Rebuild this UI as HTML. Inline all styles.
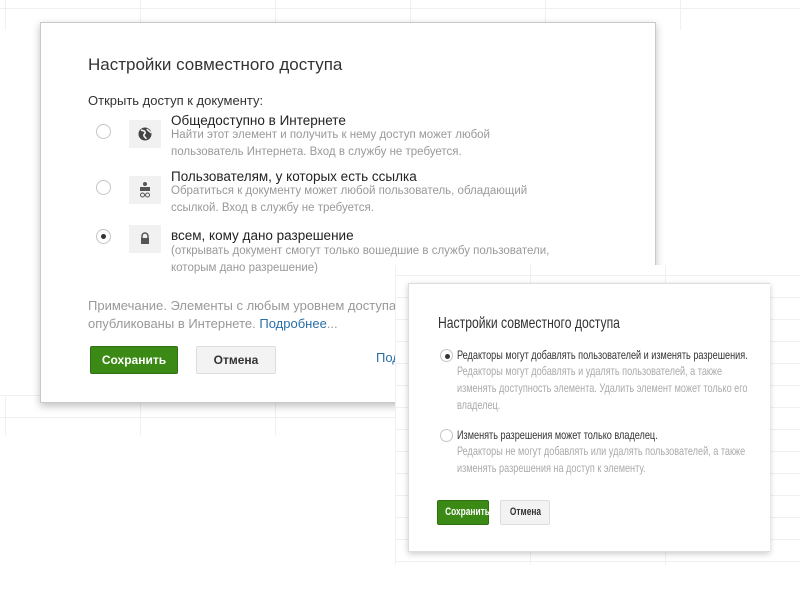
<!DOCTYPE html>
<html><head><meta charset="utf-8"><style>
*{margin:0;padding:0;box-sizing:border-box}
body{width:800px;height:600px;background:#fff;position:relative;overflow:hidden;font-family:"Liberation Sans",sans-serif}
.grid{position:absolute;background-image:linear-gradient(#f0f0f0 1px,transparent 1px),linear-gradient(90deg,#f0f0f0 1px,transparent 1px);background-size:135px 22px}
.abs{position:absolute;white-space:nowrap}
.d1{position:absolute;left:40px;top:22px;width:616px;height:381px;background:#fff;border:1px solid #c8c8c8;box-shadow:0 3px 8px rgba(0,0,0,.25)}
.radio{position:absolute;width:15px;height:15px;border:1px solid #c4c4c4;border-radius:50%;background:#fff}
.radio.on::after{content:"";position:absolute;left:4px;top:4px;width:5px;height:5px;border-radius:50%;background:#333}
.ib{position:absolute;width:32px;height:28px;background:#f1f1f1}
.t{font-size:13.5px;color:#222}
.s{font-size:11.5px;color:#999;line-height:17px}
.btn{position:absolute;border-radius:2px;font-weight:bold;text-align:center}
.nar{transform:scaleX(0.76);transform-origin:0 0}
</style></head><body>
<div class="grid" style="left:0;top:0;width:800px;height:30px;background-position:5px 8px"></div>
<div class="grid" style="left:0;top:395px;width:420px;height:40px;background-position:5px 0"></div>
<div class="d1">
 <div class="abs" style="left:47px;top:32px;font-size:17px;color:#333">Настройки совместного доступа</div>
 <div class="abs" style="left:47px;top:70px;font-size:13px;color:#333">Открыть доступ к документу:</div>
 <div class="radio" style="left:55px;top:101px"></div>
 <div class="ib" style="left:88px;top:97px"><svg width="32" height="28"><circle cx="16" cy="14" r="6.5" fill="#444"/><path d="M12 10c2 1 3 0 4 2s-2 2-1 4 2 1 2 3M18 9c1 2 3 2 4 4" stroke="#f1f1f1" stroke-width="1.6" fill="none"/></svg></div>
 <div class="abs t" style="left:130px;top:90px">Общедоступно в Интернете</div>
 <div class="abs s" style="left:130px;top:104px">Найти этот элемент и получить к нему доступ может любой<br>пользователь Интернета. Вход в службу не требуется.</div>
 <div class="radio" style="left:55px;top:157px"></div>
 <div class="ib" style="left:88px;top:153px"><svg width="32" height="28"><circle cx="16" cy="8" r="2" fill="#555"/><rect x="11" y="11" width="10" height="4" fill="#555"/><circle cx="13.5" cy="19" r="2" stroke="#555" fill="none"/><circle cx="18.5" cy="19" r="2" stroke="#555" fill="none"/></svg></div>
 <div class="abs t" style="left:130px;top:146px">Пользователям, у которых есть ссылка</div>
 <div class="abs s" style="left:130px;top:160px">Обратиться к документу может любой пользователь, обладающий<br>ссылкой. Вход в службу не требуется.</div>
 <div class="radio on" style="left:55px;top:206px"></div>
 <div class="ib" style="left:88px;top:202px"><svg width="32" height="28"><path d="M13 13v-2a3 3 0 0 1 6 0v2" stroke="#555" stroke-width="1.5" fill="none"/><rect x="12" y="13" width="8" height="6" fill="#555"/></svg></div>
 <div class="abs t" style="left:130px;top:205px">всем, кому дано разрешение</div>
 <div class="abs s" style="left:130px;top:220px">(открывать документ смогут только вошедшие в службу пользователи,<br>которым дано разрешение)</div>
 <div class="abs" style="left:47px;top:274px;font-size:13px;color:#999;line-height:18px">Примечание. Элементы с любым уровнем доступа могут быть<br>опубликованы в Интернете. <span style="color:#2a6fa8">Подробнее</span>...</div>
 <div class="btn" style="left:49px;top:323px;width:88px;height:28px;background:#3c8a16;border:1px solid #2f7010;color:#fff;font-size:12px;line-height:26px">Сохранить</div>
 <div class="btn" style="left:155px;top:323px;width:80px;height:28px;background:#f3f3f3;border:1px solid #ddd;color:#333;font-size:12px;line-height:26px">Отмена</div>
 <div class="abs" style="left:335px;top:327px;font-size:13px;color:#2a6fa8">Поделиться</div>
</div>
<div class="grid" style="left:395px;top:265px;width:405px;height:300px;background-color:#fff;background-position:0 10px"></div>
<div style="position:absolute;left:408px;top:283px;width:362px;height:269px;background:#fff;border:1px solid #ddd;border-right:none;box-shadow:0 2px 6px rgba(0,0,0,.2);overflow:hidden">
 <div class="abs nar" style="left:29px;top:31px;font-size:16px;color:#333">Настройки совместного доступа</div>
 <div class="radio on" style="left:31px;top:65px;width:13px;height:13px"></div>
 <div class="abs nar" style="left:48px;top:64px;font-size:12px;color:#333">Редакторы могут добавлять пользователей и изменять разрешения.</div>
 <div class="abs nar" style="left:48px;top:79px;font-size:12px;color:#aaa;line-height:17px">Редакторы могут добавлять и удалять пользователей, а также<br>изменять доступность элемента. Удалить элемент может только его<br>владелец.</div>
 <div class="radio" style="left:31px;top:145px;width:13px;height:13px"></div>
 <div class="abs nar" style="left:48px;top:144px;font-size:12px;color:#333">Изменять разрешения может только владелец.</div>
 <div class="abs nar" style="left:48px;top:159px;font-size:12px;color:#aaa;line-height:17px">Редакторы не могут добавлять или удалять пользователей, а также<br>изменять разрешения на доступ к элементу.</div>
 <div class="btn" style="left:28px;top:216px;width:52px;height:25px;background:#3c8a16;border:1px solid #2f7010;color:#fff;font-size:11px;line-height:23px"><span style="display:inline-block;transform:scaleX(0.76)">Сохранить</span></div>
 <div class="btn" style="left:91px;top:216px;width:50px;height:25px;background:#f3f3f3;border:1px solid #ddd;color:#333;font-size:11px;line-height:23px"><span style="display:inline-block;transform:scaleX(0.76)">Отмена</span></div>
</div>
</body></html>
